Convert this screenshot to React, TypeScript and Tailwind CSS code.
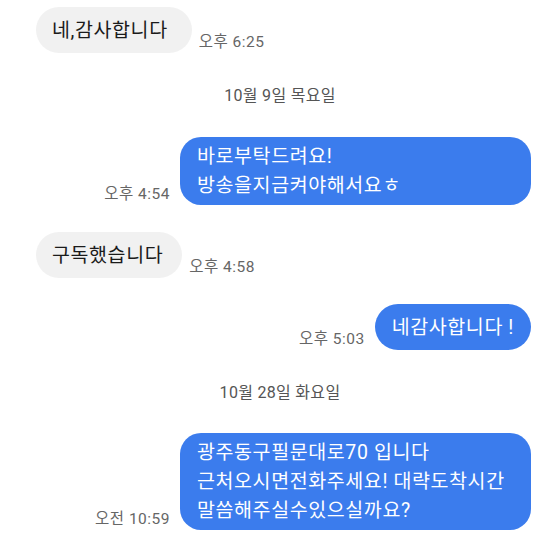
import React from "react";

const font = { fontFamily: 'Roboto, "Noto Sans CJK KR", "Noto Sans", sans-serif' };

function Left({ text, time, cls, pr }: { text: string; time: string; cls?: string; pr: string }) {
  return (
    <div className={`flex items-end gap-[7px] pl-[36px] ${cls ?? ""}`}>
      <div
        className={`rounded-[23px] bg-[#f1f1f1] pl-[16px] ${pr} h-[46px] flex items-center text-[19.5px] tracking-[0.6px] text-[#1b1b1b] leading-[29px]`}
      >
        {text}
      </div>
      <div className="text-[15.5px] tracking-[0.5px] text-[#666666] leading-[20px] mb-[1px]">{time}</div>
    </div>
  );
}

function Right({ lines, time, cls, wide }: { lines: string[]; time: string; cls?: string; wide?: boolean }) {
  return (
    <div className={`flex items-end justify-end gap-[10px] pr-[29px] ${cls ?? ""}`}>
      <div className="text-[15.5px] tracking-[0.5px] text-[#666666] leading-[20px] mb-[1px]">{time}</div>
      <div
        className={`bg-[#3b7ced] text-white text-[19.5px] tracking-[0.6px] leading-[29px] ${
          wide ? "w-[351px] rounded-[21px] pl-[17px] py-[5px]" : "rounded-[23px] pl-[17px] pr-[17px] h-[46px] flex items-center"
        }`}
      >
        {lines.map((l, i) => (
          <div key={i}>{l}</div>
        ))}
      </div>
    </div>
  );
}

function DateLine({ text, cls }: { text: string; cls?: string }) {
  return (
    <div className={`text-center text-[16px] tracking-[0.3px] leading-[20px] text-[#555555] ${cls ?? ""}`}>{text}</div>
  );
}

export default function App() {
  return (
    <div className="w-[560px] h-[560px] bg-white overflow-hidden" style={font}>
      <div className="pt-[7px] flex flex-col">
        <Left text="네,감사합니다" time="오후 6:25" pr="pr-[24px]" />
        <DateLine text="10월 9일 목요일" cls="mt-[33px]" />
        <Right wide lines={["바로부탁드려요!", "방송을지금켜야해서요ㅎ"]} time="오후 4:54" cls="mt-[31px]" />
        <Left text="구독했습니다" time="오후 4:58" pr="pr-[19px]" cls="mt-[27px]" />
        <Right lines={["네감사합니다 !"]} time="오후 5:03" cls="mt-[26px]" />
        <DateLine text="10월 28일 화요일" cls="mt-[33px]" />
        <Right
          wide
          lines={["광주동구필문대로70 입니다", "근처오시면전화주세요! 대략도착시간", "말씀해주실수있으실까요?"]}
          time="오전 10:59"
          cls="mt-[30px]"
        />
      </div>
    </div>
  );
}
